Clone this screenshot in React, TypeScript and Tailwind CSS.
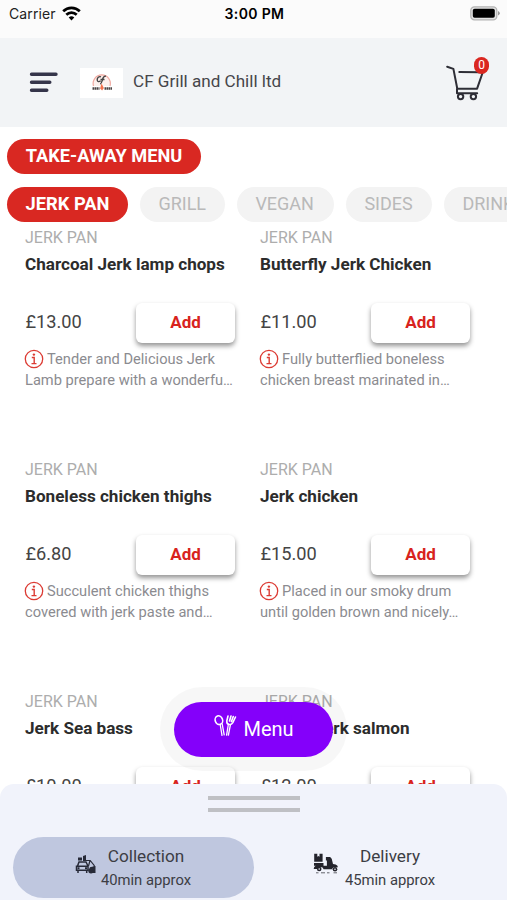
import React from "react";

type Dish = { name: string; price: string; lines: [string, string] };

const dishes: Dish[] = [
  { name: "Charcoal Jerk lamp chops", price: "£13.00", lines: ["Tender and Delicious Jerk", "Lamb prepare with a wonderfu…"] },
  { name: "Butterfly Jerk Chicken", price: "£11.00", lines: ["Fully butterflied boneless", "chicken breast marinated in…"] },
  { name: "Boneless chicken thighs", price: "£6.80", lines: ["Succulent chicken thighs", "covered with jerk paste and…"] },
  { name: "Jerk chicken", price: "£15.00", lines: ["Placed in our smoky drum", "until golden brown and nicely…"] },
  { name: "Jerk Sea bass", price: "£10.00", lines: ["", ""] },
  { name: "Grilled Jerk salmon", price: "£12.00", lines: ["", ""] },
];

function StatusBar() {
  return (
    <div className="grid h-[38px] shrink-0 grid-cols-3 bg-[#fbfbfb] pl-[9px] pr-[7px] pt-[4px] font-['Inter',sans-serif] text-black">
      <div className="flex h-[19px] items-center gap-[6px]">
        <span className="text-[14px] tracking-[0.1px] text-[#222]">Carrier</span>
        <svg width="19" height="15" viewBox="0 0 19 15" fill="none" stroke="#000" strokeWidth="2.7">
          <path d="M1.2 5.3a11.8 11.8 0 0 1 16.6 0" />
          <path d="M4.3 8.7a7.4 7.4 0 0 1 10.4 0" />
          <path d="M9.5 14.5 6.7 11.6a4 4 0 0 1 5.6 0z" fill="#000" stroke="none" />
        </svg>
      </div>
      <div className="flex h-[19px] items-center justify-center whitespace-nowrap text-[14px] font-semibold tracking-[0.35px]">3:00 PM</div>
      <div className="flex h-[19px] items-center justify-end">
        <svg width="30" height="15" viewBox="0 0 30 15">
          <rect x="0.8" y="0.8" width="26" height="13" rx="3.6" fill="#e4e4e4" stroke="#b4b4b4" strokeWidth="1.3" />
          <rect x="2.8" y="2.8" width="22" height="9" rx="1.8" fill="#000" />
          <path d="M28 5v4.6q1.8-.8 1.8-2.3T28 5z" fill="#999" />
        </svg>
      </div>
    </div>
  );
}

function Logo() {
  return (
    <svg className="ml-[22px] bg-white" width="43" height="30" viewBox="0 0 43 30" fill="none">
      <path d="M13.5 18a8.6 8.6 0 1 1 16.5 0" fill="#fdf0ed" stroke="#f0a9a0" strokeWidth="1.2" />
      <path d="M21 8.8c-2-.8-4 1-3.8 3.2.2 2 2 2 3.4.8M26 8.2c-3-.6-3 2-3.8 4.4-.6 2-1.3 3.2-2 3.4M20.5 11.5h4" stroke="#444" strokeWidth="1.4" />
      <path d="M21.5 15.5l2.4 4.5-1.8 2.4-2-2z" fill="#f2724e" />
      <path d="M12.5 20.5h7M24.5 20.5h7.5" stroke="#4b4444" strokeWidth="2.4" strokeDasharray="1.7 .4" />
    </svg>
  );
}

function Cart() {
  return (
    <div className="relative ml-auto mr-[21px] h-[40px] w-[40px]">
      <svg width="40" height="40" viewBox="0 0 40 40" fill="none" stroke="#2e2e36" strokeWidth="2" strokeLinecap="round" strokeLinejoin="round">
        <path d="M1.2 3.7 7.4 5.9l3.9 19.8h19.8L36.5 10M13.3 8.9 34 9.3M11 25.7v4.6h20.2" />
        <circle cx="14.6" cy="33.6" r="2.7" />
        <circle cx="27.4" cy="33.6" r="2.7" />
      </svg>
      <span className="absolute right-[-3px] top-[-6px] flex h-[17px] w-[15px] items-center justify-center rounded-full bg-[#da2720] text-[12px] text-white">0</span>
    </div>
  );
}

function Header() {
  return (
    <header className="flex h-[89px] shrink-0 items-center bg-[#f2f4f6] pl-[29px]">
      <svg width="29" height="21" viewBox="0 0 29 21" stroke="#35354a" strokeWidth="3.4" strokeLinecap="round">
        <path d="M2.5 2.3h24.5M2.5 10.3h18.3M2.5 18.2h15.3" />
      </svg>
      <Logo />
      <h1 className="ml-[10px] pb-px text-[17.1px] font-normal text-[#46464a]">CF Grill and Chill ltd</h1>
      <Cart />
    </header>
  );
}

function Tab({ label, width }: { label: string; width: string }) {
  return (
    <button className={`flex h-[35px] shrink-0 items-center rounded-full bg-[#f3f3f3] pb-[2px] pl-[18.4px] text-[18px] text-[#b9b9b9] ${width}`}>{label}</button>
  );
}

function Info() {
  return (
    <svg className="mb-px" width="20" height="20" viewBox="0 0 20 20" fill="none" stroke="#dc3b33">
      <circle cx="10" cy="10" r="8.7" strokeWidth="1.3" />
      <path d="M7.8 8.5h2.4v6M7.5 14.6h5" strokeWidth="1.4" />
      <circle cx="9.9" cy="5.6" r="1.2" fill="#dc3b33" stroke="none" />
    </svg>
  );
}

function DishCard({ dish }: { dish: Dish }) {
  return (
    <article className="h-[232px] w-[210px] whitespace-nowrap">
      <p className="h-[26px] text-[16px] leading-[22px] text-[#adadad]">JERK PAN</p>
      <h2 className="h-[50px] text-[17.1px] font-bold leading-[22px] text-[#2c2c2c]">{dish.name}</h2>
      <div className="flex h-[40px] items-center justify-between">
        <span className="pb-[2px] pl-[0.5px] text-[18.2px] text-[#444]">{dish.price}</span>
        <button className="h-[40px] w-[99px] rounded-[6px] bg-white text-[17px] font-bold text-[#d8231d] shadow-[0_3px_5px_rgba(0,0,0,0.42)]">Add</button>
      </div>
      {dish.lines[0] !== "" && (
        <div className="pt-[6px] text-[14.65px] leading-[21px] text-[#8b8b90]">
          <div className="-ml-px flex h-[21px] items-center gap-[3px]">
            <Info />
            <span>{dish.lines[0]}</span>
          </div>
          <div>{dish.lines[1]}</div>
        </div>
      )}
    </article>
  );
}

function CarIcon() {
  return (
    <svg className="mb-[6px] shrink-0" width="22" height="20" viewBox="0 0 22 20" fill="none" stroke="#272a38" strokeWidth="1.5">
      <path d="M2.5 11 4 7h7l2 4M1.5 11.2h11.5v4H1.5zM3 15v3M11.7 15v3" />
      <path d="M2.5 13.2h2M10 13.2h2" strokeWidth="2" />
      <path d="M3 2.5h4v3H3zM8 1l3-1v6H8z" fill="#272a38" stroke="none" />
      <path d="M10.5 5.5h4.7l4 5v2.5M15 5.5l-1.5 5.5" strokeWidth="1.2" />
      <path d="M14.8 12.2 20.5 11v7h-5.8z" fill="#272a38" stroke="none" />
      <circle cx="16" cy="15.8" r="2.7" fill="#272a38" stroke="none" />
    </svg>
  );
}

function ScooterIcon() {
  return (
    <svg className="mb-[7px] shrink-0" width="26" height="22" viewBox="0 0 26 22" fill="#24242c">
      <path d="M1.2.8h3.1v3l1.1-.7 1.1.7v-3h3.1v8H1.2zM1 10h9.5v2.8h3.4V7.5h-1V4h4.2l1.6 1.8L20 11l2.6.5q2 .7 2.4 2.8h-4.5l-1.7 2h-8.2q-.5-2.4-3.1-2.4T4.6 16H.7q0-2.4 2-3.2H1z" />
      <circle cx="6.2" cy="16" r="2.3" />
      <circle cx="6.2" cy="16" r=".8" fill="#f1f3fb" />
      <circle cx="22" cy="16.2" r="2.3" />
      <circle cx="22" cy="16.2" r=".8" fill="#f1f3fb" />
      <path d="M3 19.8h2.5M8 19.8h4M14 19.8h2.5M20.5 19.8H24" stroke="#55555c" strokeWidth=".9" />
    </svg>
  );
}

function Cutlery() {
  return (
    <svg className="mb-[5px]" width="24" height="24" viewBox="0 0 24 24" fill="none" stroke="#fff" strokeWidth="1.6" strokeLinecap="round" strokeLinejoin="round">
      <ellipse cx="5.9" cy="6.2" rx="3.7" ry="4.4" transform="rotate(-20 5.9 6.2)" />
      <path d="M7.2 10.5 9 21.3M9.2 10 11.2 20.8" strokeWidth="1.3" />
      <path d="M15 2 13.8 7q-.2 3 2 3.4 2.5.7 4-1.8L22.5 3M18 2 16.5 7M20.3 2.5 18.4 7.5" />
      <path d="M15.3 10.5 13.6 21.2M17.4 10.8 15.4 21.2" strokeWidth="1.3" />
    </svg>
  );
}

export default function App() {
  return (
    <div className="relative flex h-[900px] w-[507px] flex-col overflow-hidden bg-white font-['Roboto',sans-serif]">
      <StatusBar />
      <Header />
      <main className="flex min-h-0 flex-1 flex-col overflow-hidden pt-[12px]">
        <button className="ml-[7px] flex h-[35px] w-[194px] shrink-0 items-center justify-center rounded-full bg-[#d92822] pb-[2px] text-[18.2px] font-bold text-white">TAKE-AWAY MENU</button>
        <nav className="ml-[7px] mt-[13px] flex h-[35px] shrink-0 gap-[12px]">
          <button className="h-[35px] w-[121px] shrink-0 rounded-full bg-[#d92822] pb-[2px] text-[18.3px] font-bold text-white">JERK PAN</button>
          <Tab label="GRILL" width="w-[85px]" />
          <Tab label="VEGAN" width="w-[97px]" />
          <Tab label="SIDES" width="w-[86px]" />
          <Tab label="DRINKS" width="w-[101px]" />
        </nav>
        <section className="grid grid-cols-[210px_210px] gap-x-[25px] pl-[25px] pt-[5px]">
          {dishes.map((dish) => (
            <DishCard key={dish.name} dish={dish} />
          ))}
        </section>
      </main>
      <div className="absolute left-[160px] top-[687px] flex h-[84px] w-[187px] items-center justify-center rounded-full bg-black/3">
        <button className="flex h-[55px] w-[159px] items-center justify-center gap-[6px] rounded-full bg-[#8400fa] pb-px text-[20px] text-white">
          <Cutlery />
          <span>Menu</span>
        </button>
      </div>
      <footer className="relative z-10 flex h-[116px] shrink-0 flex-col rounded-t-[14px] bg-[#f1f3fb] pt-[12px]">
        <div className="mx-auto flex h-[16px] w-[92px] flex-col justify-between">
          <div className="h-[4px] bg-[#bfc0c4]" />
          <div className="h-[4px] bg-[#bfc0c4]" />
        </div>
        <div className="mt-[25px] flex whitespace-nowrap pl-[13px] text-[#3c3d44]">
          <button className="flex h-[61px] w-[241px] shrink-0 items-center rounded-full bg-[#bfc7df] pl-[62px] text-center">
            <CarIcon />
            <span className="ml-[4px] flex w-[90px] shrink-0 flex-col items-center pt-px">
              <span className="text-[17.2px] leading-[24px]">Collection</span>
              <span className="text-[14.8px] leading-[24px]">40min approx</span>
            </span>
          </button>
          <button className="flex h-[61px] w-[241px] shrink-0 items-center pl-[59px] text-center">
            <ScooterIcon />
            <span className="ml-[6px] flex w-[90px] shrink-0 flex-col items-center pt-px">
              <span className="text-[17.2px] leading-[24px]">Delivery</span>
              <span className="text-[14.8px] leading-[24px]">45min approx</span>
            </span>
          </button>
        </div>
      </footer>
    </div>
  );
}
